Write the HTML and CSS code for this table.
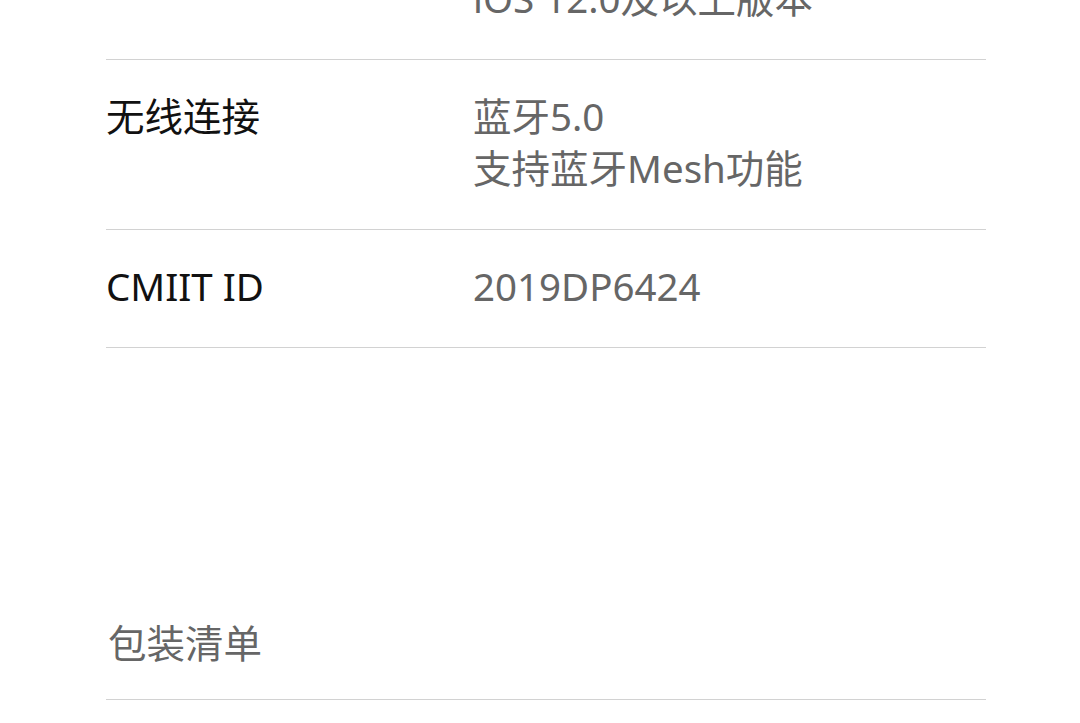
FILE: index.html
```html
<!DOCTYPE html>
<html lang="zh-CN">
<head>
    <meta charset="UTF-8">
    <meta name="viewport" content="width=device-width, initial-scale=1.0">
    <title>规格参数</title>
    <link rel="stylesheet" href="styles.css">
</head>
<body>
    <div class="page">
        <div class="spec-list">
            <div class="spec-row">
                <div class="spec-label">系统要求</div>
                <div class="spec-value">
                    <div>Android 5.0及以上版本</div>
                    <div>iOS 12.0及以上版本</div>
                </div>
            </div>
            <div class="spec-row">
                <div class="spec-label">无线连接</div>
                <div class="spec-value">
                    <div>蓝牙5.0</div>
                    <div>支持蓝牙Mesh功能</div>
                </div>
            </div>
            <div class="spec-row">
                <div class="spec-label">CMIIT ID</div>
                <div class="spec-value">
                    <div>2019DP6424</div>
                </div>
            </div>
        </div>

        <div class="section">
            <h2 class="section-title">包装清单</h2>
        </div>
    </div>
</body>
</html>
```

FILE: styles.css
```css
body {
    margin: 0;
    padding: 0;
    background-color: #fff;
    font-family: "Noto Sans", "Noto Sans CJK SC", sans-serif;
}

.page {
    width: 880px;
    margin: -110px 0 0 106px;
}

.spec-row {
    display: flex;
    padding: 30px 0 35px;
    border-bottom: 1px solid #d2d2d2;
    font-size: 38.5px;
    line-height: 52px;
}

.spec-label {
    width: 367px;
    flex-shrink: 0;
    color: #111;
}

.spec-value {
    color: #666;
}

.section {
    padding-top: 269px;
    border-bottom: 1px solid #d2d2d2;
}

.section-title {
    margin: 0;
    padding: 0 0 30px 2px;
    font-size: 38.5px;
    line-height: 52px;
    font-weight: normal;
    color: #666;
}
```
